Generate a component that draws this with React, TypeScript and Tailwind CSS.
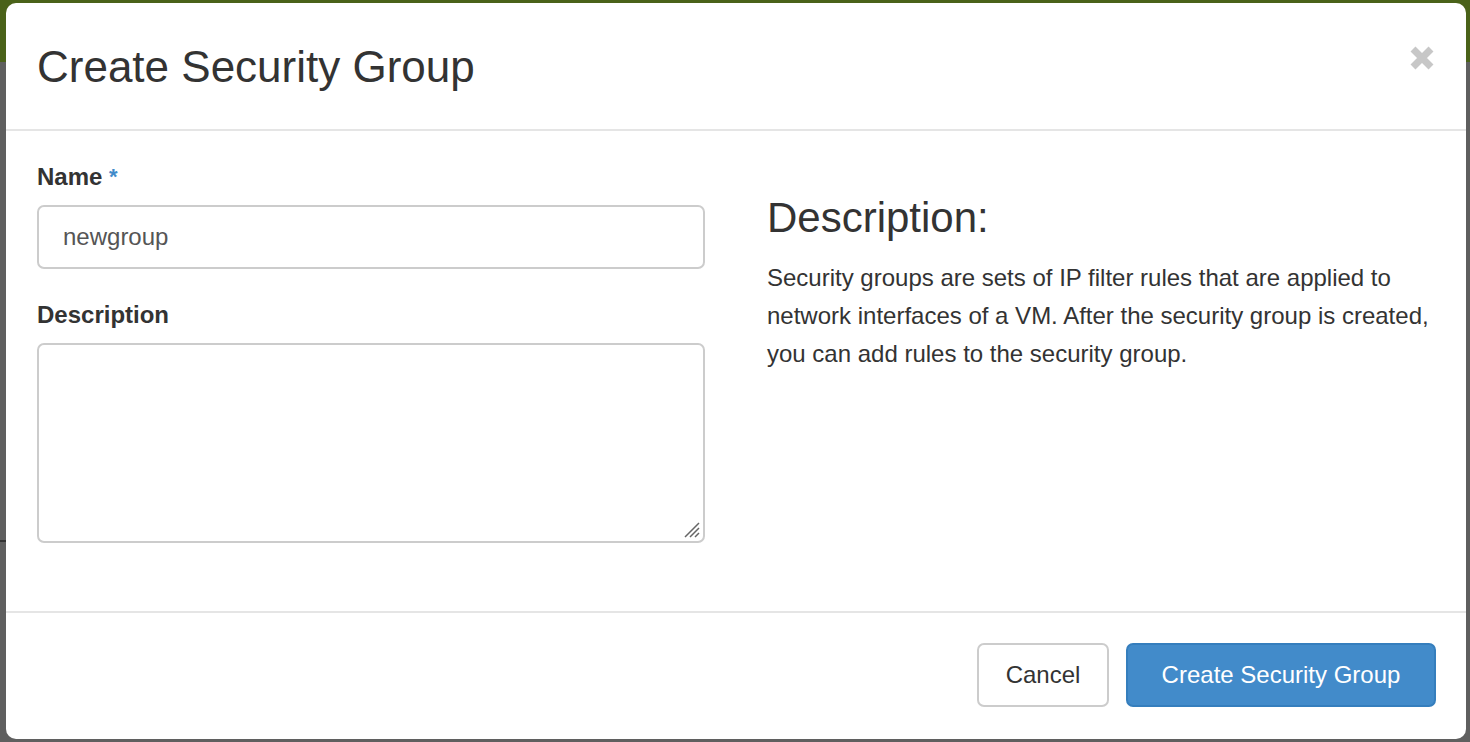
export default function App() {
  return (
    <div className="relative w-[1470px] h-[742px] overflow-hidden bg-[#5f5f5f]" style={{ fontFamily: '"Liberation Sans", Arial, sans-serif' }}>
      <div className="h-[62px] bg-[#4a6219]" />
      <div className="absolute left-0 top-[540px] w-[6px] h-[2px] bg-[#333]" />
      <div className="absolute left-[6px] top-[3px] w-[1460px] h-[736px] bg-white rounded-[10px] flex flex-col text-[#333]">
        <div className="h-[128px] border-b-2 border-[#e5e5e5] flex items-center justify-between pl-[31px] pr-[30px] pt-[2px]">
          <h1 className="text-[44px] leading-none">Create Security Group</h1>
          <svg width="28" height="28" viewBox="0 0 28 28" className="mb-[18px]">
            <path d="M5 5 L23 23 M23 5 L5 23" stroke="#c7c7c7" strokeWidth="7" strokeLinecap="butt" />
          </svg>
        </div>
        <div className="flex h-[480px] pl-[31px] pt-[30px]">
          <div className="w-[668px] flex flex-col">
            <label className="text-[24px] font-bold leading-[32px]">
              Name <span className="text-[#428bca] align-top text-[22px]">*</span>
            </label>
            <div className="mt-[12px] h-[64px] border-2 border-[#ccc] rounded-[7px] flex items-center px-[24px] text-[24px] text-[#555]">newgroup</div>
            <label className="mt-[30px] text-[24px] font-bold leading-[32px]">Description</label>
            <div className="relative mt-[12px] h-[200px] border-2 border-[#ccc] rounded-[7px]">
              <svg className="absolute right-[2px] bottom-[2px]" width="20" height="20" viewBox="0 0 20 20">
                <path d="M18 4 L4 18 M18 9 L9 18 M18 14 L14 18" stroke="#666" strokeWidth="1.5" />
              </svg>
            </div>
          </div>
          <div className="ml-[62px] w-[670px] pt-[36px]">
            <h3 className="text-[42px] leading-none">Description:</h3>
            <p className="mt-[20px] text-[24px] leading-[38px]">
              Security groups are sets of IP filter rules that are applied to network interfaces of a VM. After the security group is created, you can add rules to the security group.
            </p>
          </div>
        </div>
        <div className="border-t-2 border-[#e5e5e5] flex justify-end gap-[17px] pr-[30px] pt-[30px]">
          <button className="h-[64px] w-[132px] border-2 border-[#ccc] rounded-[7px] bg-white text-[24px] text-[#333]">Cancel</button>
          <button className="h-[64px] w-[310px] border-2 border-[#357ebd] rounded-[7px] bg-[#428bca] text-[24px] text-white">Create Security Group</button>
        </div>
      </div>
    </div>
  );
}
